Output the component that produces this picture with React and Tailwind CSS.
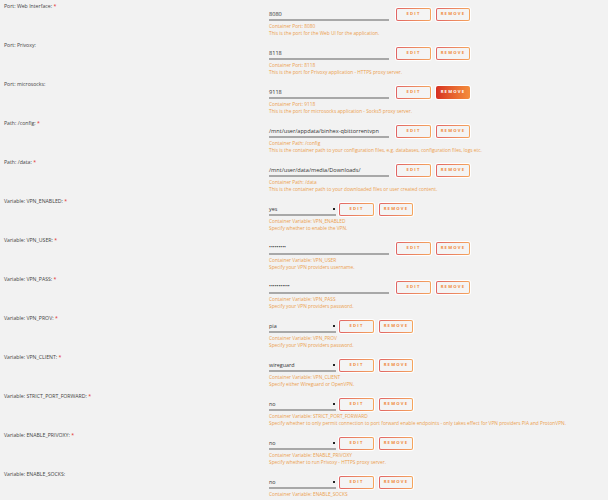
const rows = [
  { label: 'Port: Web Interface:', req: true, type: 'text', value: '8080', desc: ['Container Port: 8080', 'This is the port for the Web UI for the application.'] },
  { label: 'Port: Privoxy:', type: 'text', value: '8118', desc: ['Container Port: 8118', 'This is the port for Privoxy application - HTTPS proxy server.'] },
  { label: 'Port: microsocks:', type: 'text', value: '9118', active: true, desc: ['Container Port: 9118', 'This is the port for microsocks application - Socks5 proxy server.'] },
  { label: 'Path: /config:', req: true, type: 'text', value: '/mnt/user/appdata/binhex-qbittorrentvpn', desc: ['Container Path: /config', 'This is the container path to your configuration files, e.g. databases, configuration files, logs etc.'] },
  { label: 'Path: /data:', req: true, type: 'text', value: '/mnt/user/data/media/Downloads/', desc: ['Container Path: /data', 'This is the container path to your downloaded files or user created content.'] },
  { label: 'Variable: VPN_ENABLED:', req: true, type: 'select', value: 'yes', desc: ['Container Variable: VPN_ENABLED', 'Specify whether to enable the VPN.'] },
  { label: 'Variable: VPN_USER:', req: true, type: 'password', value: '•••••••••', desc: ['Container Variable: VPN_USER', 'Specify your VPN providers username.'] },
  { label: 'Variable: VPN_PASS:', req: true, type: 'password', value: '•••••••••••', desc: ['Container Variable: VPN_PASS', 'Specify your VPN providers password.'] },
  { label: 'Variable: VPN_PROV:', req: true, type: 'select', value: 'pia', desc: ['Container Variable: VPN_PROV', 'Specify your VPN providers password.'] },
  { label: 'Variable: VPN_CLIENT:', req: true, type: 'select', value: 'wireguard', desc: ['Container Variable: VPN_CLIENT', 'Specify either Wireguard or OpenVPN.'] },
  { label: 'Variable: STRICT_PORT_FORWARD:', req: true, type: 'select', value: 'no', desc: ['Container Variable: STRICT_PORT_FORWARD', 'Specify whether to only permit connection to port forward enable endpoints - only takes effect for VPN providers PIA and ProtonVPN.'] },
  { label: 'Variable: ENABLE_PRIVOXY:', req: true, type: 'select', value: 'no', desc: ['Container Variable: ENABLE_PRIVOXY', 'Specify whether to run Privoxy - HTTPS proxy server.'] },
  { label: 'Variable: ENABLE_SOCKS:', type: 'select', value: 'no', desc: ['Container Variable: ENABLE_SOCKS', ''] },
];

function Btn({ children, active, w }) {
  if (active) {
    return (
      <div className={`${w} h-[13px] rounded-[2px] bg-gradient-to-r from-[#d62e22] to-[#f48d3c] shadow-[0_0_0_1px_#fff] flex items-center justify-center text-[4.2px] font-bold tracking-[1.2px] text-white`}>
        {children}
      </div>
    );
  }
  return (
    <div className={`${w} h-[13px] rounded-[2px] p-px bg-gradient-to-r from-[#e06464] to-[#f5a55c] shadow-[0_0_0_1px_#fff]`}>
      <div className="h-full w-full rounded-[1px] bg-[#f4f4f4] flex items-center justify-center text-[4.2px] font-bold tracking-[1.2px] text-[#f08a3c]">
        {children}
      </div>
    </div>
  );
}

function Row({ row }) {
  const isSelect = row.type === 'select';
  return (
    <div className="flex h-[39px]">
      <div className="w-[269px] shrink-0 pl-[4px] pt-[3px] text-[5.2px] leading-[7px] text-[#444]">
        {row.label}
        {row.req && <span className="text-[#e22828]"> *</span>}
      </div>
      <div className="flex-1 pt-[8px]">
        <div className="flex h-[13px] items-start">
          {isSelect ? (
            <div className="mt-px flex h-[12px] w-[67px] items-center justify-between border-b-2 border-[#a8a8a8] text-[5.4px] text-[#333]">
              <span>{row.value}</span>
              <span className="mr-px h-[2px] w-[2px] bg-[#222]" />
            </div>
          ) : (
            <div className={`mt-px flex h-[12px] w-[120px] items-center border-b-2 border-[#a8a8a8] text-[#333] ${row.type === 'password' ? 'text-[5px]' : 'text-[5.6px]'}`}>
              {row.value}
            </div>
          )}
          <div className={`flex gap-[5px] ${isSelect ? 'ml-[3px]' : 'ml-[7px]'}`}>
            <Btn w="w-[35px]">EDIT</Btn>
            <Btn w="w-[34px]" active={row.active}>REMOVE</Btn>
          </div>
        </div>
        <div className="mt-[2px] text-[4.8px] leading-[7px] text-[#eca04e]">
          {row.desc.map((d, i) => (
            <div key={i} className="whitespace-nowrap">{d}</div>
          ))}
        </div>
      </div>
    </div>
  );
}

export default function App() {
  return (
    <div className="h-[500px] w-[608px] overflow-hidden bg-[#f2f2f2] font-['Open_Sans',sans-serif]">
      {rows.map((r) => (
        <Row key={r.label} row={r} />
      ))}
    </div>
  );
}
